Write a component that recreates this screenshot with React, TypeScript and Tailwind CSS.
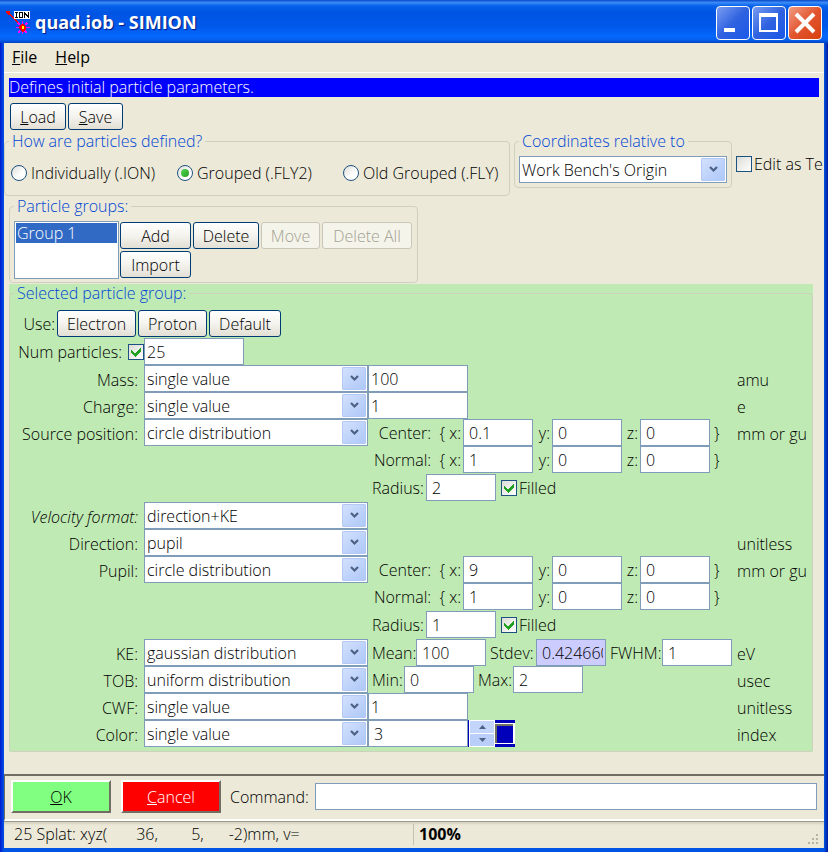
import type { ReactNode } from "react"
import { clsx } from "clsx"

const CheckMark = () => (
  <svg
    viewBox="0 0 16 16"
    className="pointer-events-none absolute inset-0 hidden h-4 w-4 peer-checked:block"
    shapeRendering="crispEdges"
  >
    <path d="M3 6v3l4 4 6-6V3.500l-6 6z" fill="#21a121" />
  </svg>
)

function Check({ label, checked = false, hideLabel = false }: { label: string; checked?: boolean; hideLabel?: boolean }) {
  return (
    <label className="flex items-center gap-0.5 whitespace-nowrap">
      <span className="relative block h-4 w-4">
        <input
          type="checkbox"
          defaultChecked={checked}
          aria-label={label}
          className="peer block h-4 w-4 appearance-none border border-[#1c5180] bg-gradient-to-br from-[#dcdcd7] to-white"
        />
        <CheckMark />
      </span>
      {!hideLabel && <span>{label}</span>}
    </label>
  )
}

function Radio({ label, checked = false }: { label: string; checked?: boolean }) {
  return (
    <label className="flex w-[166px] items-center gap-1 whitespace-nowrap">
      <span className="relative block h-4 w-4">
        <input
          type="radio"
          name="defined"
          defaultChecked={checked}
          className="peer block h-4 w-4 appearance-none rounded-full border border-[#1c5180] bg-gradient-to-br from-[#dcdcd7] to-white to-60%"
        />
        <span className="pointer-events-none absolute inset-1 hidden rounded-full bg-gradient-to-br from-[#55d551] to-[#21a121] peer-checked:block" />
      </span>
      <span>{label}</span>
    </label>
  )
}

function Button({ children, className, disabled }: { children: ReactNode; className?: string; disabled?: boolean }) {
  return (
    <button
      type="button"
      disabled={disabled}
      className={clsx(
        "h-[27px] shrink-0 rounded-[3px] border leading-5 whitespace-nowrap",
        disabled
          ? "border-[#c9c7ba] bg-[#f5f4ea] text-[#a1a192]"
          : "border-[#003c74] bg-gradient-to-b from-white via-[#f4f3ee] to-[#e3dfd5]",
        className,
      )}
    >
      {children}
    </button>
  )
}

function Combo({ value, label, className }: { value: string; label: string; className?: string }) {
  return (
    <div className={clsx("relative h-[27px]", className)}>
      <select
        aria-label={label}
        defaultValue={value}
        className="block h-full w-full appearance-none border border-[#7f9db9] bg-white pl-0.5 leading-5 outline-none"
      >
        <option>{value}</option>
      </select>
      <span className="pointer-events-none absolute inset-y-0.5 right-0.5 flex w-6 items-center justify-center rounded-[1px] border border-[#b4c8f5] bg-gradient-to-br from-[#d2e0fd] to-[#aec8f7]">
        <svg width="9" height="7" viewBox="0 0 9 7">
          <path d="M1 1l3.500 3.500L8 1" fill="none" stroke="#4d6185" strokeWidth="2.200" />
        </svg>
      </span>
    </div>
  )
}

function Field({ value, label, className }: { value: string; label: string; className?: string }) {
  return (
    <input
      type="text"
      aria-label={label}
      defaultValue={value}
      className={clsx("block h-[27px] shrink-0 border border-[#7f9db9] leading-5 outline-none", className)}
    />
  )
}

const small = "w-[70px] bg-white px-[5px]"
const wide = "w-[100px] bg-white px-0.5"

function Vector({ name, x, y, z, lead }: { name: string; x: string; y: string; z: string; lead: string }) {
  return (
    <div className="flex items-center whitespace-pre">
      <span className="flex w-[95px] justify-end pr-0.5">{lead}</span>
      <Field label={`${name} x`} value={x} className={small} />
      <span className="w-[19px] pr-0.5 text-right">y:</span>
      <Field label={`${name} y`} value={y} className={small} />
      <span className="w-[18px] pr-0.5 text-right">z:</span>
      <Field label={`${name} z`} value={z} className={small} />
      <span className="pl-1">{"}"}</span>
    </div>
  )
}

function Radius({ value }: { value: string }) {
  return (
    <div className="flex h-[29px] items-center">
      <span className="w-[58px] pl-1">Radius:</span>
      <Field label="Radius" value={value} className={clsx(small, "mr-[5px]")} />
      <Check label="Filled" checked />
    </div>
  )
}

type RowProps = { label: string; combo?: string; unit?: string; italic?: boolean; children?: ReactNode }

function Row({ label, combo, unit, italic, children }: RowProps) {
  return (
    <div className="grid grid-cols-[135px_224px_1fr_75px] items-center">
      <span className={clsx("pt-0.5 pr-1.5 text-right whitespace-nowrap", italic && "italic")}>{label}</span>
      {combo ? <Combo label={label} value={combo} /> : <span />}
      <div className="flex items-center">{children}</div>
      <span className="pt-0.5 whitespace-nowrap">{unit}</span>
    </div>
  )
}

function TitleBar() {
  const control = "flex h-[34px] w-[34px] items-center justify-center rounded border border-white"
  return (
    <header className="flex h-[43px] items-center justify-between bg-[linear-gradient(180deg,#0a48c8_0%,#3a8cf8_6%,#0560ea_14%,#0054e3_30%,#0058ea_60%,#0468fc_85%,#0560f0_93%,#0040c0_100%)] pr-1.5 pl-1.5">
      <h1 className="flex items-center gap-1 font-['Open_Sans'] text-lg font-bold text-white [text-shadow:1px_1px_1px_#0a1883]">
        <svg width="25" height="26" viewBox="0 0 25 26" shapeRendering="crispEdges">
          <path d="M0 2h4v4H2L0 4z" fill="#f00" />
          <path d="M3 5l11 10" stroke="#f00" strokeWidth="1.500" />
          <rect x="8" y="2" width="16" height="8" fill="#fff" />
          <path d="M9 3.500h3M10.500 3v5M9 8.500h3M13.500 3.500h3v5h-3zM18.500 9V3M22.500 9V3M19 4l3 4" fill="none" stroke="#000" />
          <path d="M12 14l2 2M21 14l-2 2M12 24l2-2M21 24l-2-2M16.500 12v3M16.500 22v3M10 18.500h3M20 18.500h4" stroke="#f0f" strokeWidth="1.500" />
          <path d="M13 18l2-3h3l2 3v2l-3 3h-1l-3-3z" fill="#f00" />
          <rect x="16" y="17" width="2" height="3" fill="#ff0" />
        </svg>
        quad.iob - SIMION
      </h1>
      <div className="flex gap-0.5 pt-0.5">
        <button type="button" aria-label="Minimize" className={clsx(control, "bg-gradient-to-br from-[#7a9cf0] via-[#2f62e0] to-[#1858e8]")}>
          <svg width="32" height="32">
            <rect x="7" y="21" width="11" height="4" fill="#fff" />
          </svg>
        </button>
        <button type="button" aria-label="Maximize" className={clsx(control, "bg-gradient-to-br from-[#7a9cf0] via-[#2f62e0] to-[#1858e8]")}>
          <svg width="32" height="32">
            <path d="M6 6h19v19H6zM8 10v13h15V10z" fill="#fff" fillRule="evenodd" />
          </svg>
        </button>
        <button type="button" aria-label="Close" className={clsx(control, "bg-gradient-to-br from-[#f09a80] via-[#e2552f] to-[#d84008]")}>
          <svg width="32" height="32">
            <path d="M7 7l18 18M25 7L7 25" stroke="#fff" strokeWidth="4" />
          </svg>
        </button>
      </div>
    </header>
  )
}

const legend = "px-[3px] leading-[18px] text-[#0046d5]"
const group = "rounded border border-[#d0d0bf]"
const bevel = "h-[33px] w-[100px] shrink-0 border-2 border-t-white border-r-[#716f64] border-b-[#716f64] border-l-white"

export default function App() {
  return (
    <div className="min-h-screen bg-[linear-gradient(90deg,#0019cf_0,#0055e5_4px,#0055e5_calc(100%-4px),#001898_100%)] font-['Open_Sans',sans-serif] text-base leading-5 font-light text-black">
      <div className="flex min-h-screen flex-col">
        <TitleBar />
        <div className="mx-1 mb-1 flex flex-1 flex-col overflow-hidden bg-[#ece9d8]">
          <nav className="flex h-[30px] items-center gap-[18px] border-b border-white px-2 pb-0.5 text-base font-medium">
            <button type="button"><u>F</u>ile</button>
            <button type="button"><u>H</u>elp</button>
          </nav>

          <p className="mx-[5px] mt-[5px] h-[19px] bg-[#0000ff] leading-[19px] text-white">
            Defines initial particle parameters.
          </p>
          <div className="mt-1.5 flex gap-0.5 px-1.5">
            <Button className="w-14"><u>L</u>oad</Button>
            <Button className="w-[55px]"><u>S</u>ave</Button>
          </div>

          <div className="mt-0.5 flex items-start gap-1">
            <fieldset className={clsx(group, "h-[64px] w-[505px] shrink-0 pl-1.5")}>
              <legend className={clsx(legend, "-ml-0.5")}>How are particles defined?</legend>
              <div className="flex pt-[13px]">
                <Radio label="Individually (.ION)" />
                <Radio label="Grouped (.FLY2)" checked />
                <Radio label="Old Grouped (.FLY)" />
              </div>
            </fieldset>
            <fieldset className={clsx(group, "h-14 w-[218px] shrink-0 px-1")}>
              <legend className={legend}>Coordinates relative to</legend>
              <Combo label="Coordinates relative to" value="Work Bench's Origin" className="mt-1.5" />
            </fieldset>
            <div className="pt-[22px]">
              <Check label="Edit as Te" />
            </div>
          </div>

          <fieldset className={clsx(group, "mt-px ml-[5px] h-[86px] w-[409px] pl-1")}>
            <legend className={legend}>Particle groups:</legend>
            <div className="flex gap-px pt-1.5">
              <ul role="listbox" aria-label="Particle groups" className="h-[58px] w-[105px] border border-[#7f9db9] bg-white p-px">
                <li role="option" aria-selected="true" className="h-5 bg-[#316ac5] pl-px text-white">
                  Group 1
                </li>
              </ul>
              <div className="flex flex-col gap-0.5 pt-px">
                <div className="flex gap-0.5">
                  <Button className="w-[71px]">Add</Button>
                  <Button className="w-[66px]">Delete</Button>
                  <Button className="w-[59px]" disabled>Move</Button>
                  <Button className="w-[90px]" disabled>Delete All</Button>
                </div>
                <Button className="w-[71px]">Import</Button>
              </div>
            </div>
          </fieldset>

          <section className="mt-px mr-[11px] ml-[5px] bg-[#c0eab4]">
            <fieldset className="rounded border border-[#d0d0bf] pb-1">
              <legend className={clsx(legend, "ml-1")}>Selected particle group:</legend>
              <div className="-ml-px">
                <div className="flex gap-0.5 pt-2">
                  <span className="w-[46px] pt-1 text-right">Use:</span>
                  <Button className="w-[79px]">Electron</Button>
                  <Button className="w-[69px]">Proton</Button>
                  <Button className="w-[72px]">Default</Button>
                </div>
                <div className="mt-px flex items-center">
                  <span className="w-[119px] pr-1.5 text-right whitespace-nowrap">Num particles:</span>
                  <Check label="Limit number of particles" checked hideLabel />
                  <Field label="Num particles" value="25" className={wide} />
                </div>
                <Row label="Mass:" combo="single value" unit="amu">
                  <Field label="Mass value" value="100" className={wide} />
                </Row>
                <Row label="Charge:" combo="single value" unit="e">
                  <Field label="Charge value" value="1" className={wide} />
                </Row>
                <Row label="Source position:" combo="circle distribution" unit="mm or gu">
                  <Vector name="Source center" lead="Center:  { x:" x="0.1" y="0" z="0" />
                </Row>
                <Row label="">
                  <Vector name="Source normal" lead="Normal:  { x:" x="1" y="0" z="0" />
                </Row>
                <Row label="">
                  <Radius value="2" />
                </Row>
                <Row label="Velocity format:" combo="direction+KE" italic />
                <Row label="Direction:" combo="pupil" unit="unitless" />
                <Row label="Pupil:" combo="circle distribution" unit="mm or gu">
                  <Vector name="Pupil center" lead="Center:  { x:" x="9" y="0" z="0" />
                </Row>
                <Row label="">
                  <Vector name="Pupil normal" lead="Normal:  { x:" x="1" y="0" z="0" />
                </Row>
                <Row label="">
                  <Radius value="1" />
                </Row>
                <Row label="KE:" combo="gaussian distribution" unit="eV">
                  <span className="w-12 pl-1">Mean:</span>
                  <Field label="Mean" value="100" className={small} />
                  <span className="w-[50px] pl-1">Stdev:</span>
                  <Field label="Stdev" value="0.424660" className="w-[70px] bg-[#ccccff] pr-0.5 pl-[5px]" />
                  <span className="w-14 pl-1">FWHM:</span>
                  <Field label="FWHM" value="1" className={small} />
                </Row>
                <Row label="TOB:" combo="uniform distribution" unit="usec">
                  <span className="w-9 pl-1">Min:</span>
                  <Field label="Min" value="0" className={small} />
                  <span className="w-[39px] pl-1">Max:</span>
                  <Field label="Max" value="2" className={small} />
                </Row>
                <Row label="CWF:" combo="single value" unit="unitless">
                  <Field label="CWF value" value="1" className={wide} />
                </Row>
                <Row label="Color:" combo="single value" unit="index">
                  <Field label="Color value" value="3" className="w-[100px] bg-white px-[5px]" />
                  <div className="flex h-[27px] w-[27px] flex-col border-l border-[#0000bb] bg-white p-px">
                    <button type="button" aria-label="Increase" className="flex flex-1 items-center justify-center bg-[#c3d5fb]">
                      <svg width="7" height="4"><path d="M0 4l3.500-4L7 4z" fill="#4d6185" /></svg>
                    </button>
                    <button type="button" aria-label="Decrease" className="mt-px flex flex-1 items-center justify-center bg-[#b9cffa]">
                      <svg width="7" height="4"><path d="M0 0l3.500 4L7 0z" fill="#4d6185" /></svg>
                    </button>
                  </div>
                  <button type="button" aria-label="Pick color" className="h-[27px] w-5 border-y-[3px] border-[#0000bb] bg-white pr-0.5">
                    <span className="block h-[19px] border-t-2 border-l-2 border-[#716f64] bg-[#0000bb]" />
                  </button>
                </Row>
              </div>
            </fieldset>
          </section>

          <footer className="mt-auto">
            <div className="flex h-[47px] items-center border-t-2 border-b-2 border-l border-[#716f64] border-b-white pr-[7px] pb-0.5 pl-1.5">
              <button type="button" className={clsx(bevel, "bg-[#80ff80]")}>
                <u>O</u>K
              </button>
              <button type="button" className={clsx(bevel, "ml-2.5 bg-[#ff0000] text-white")}>
                <u>C</u>ancel
              </button>
              <label htmlFor="command" className="w-[94px] shrink-0 pl-[9px]">Command:</label>
              <input id="command" type="text" className="h-[27px] min-w-0 flex-1 border border-[#7f9db9] bg-white px-1 outline-none" />
            </div>
            <div className="flex h-[27px] items-center border-t border-[#9d9a8c] pb-0.5 shadow-[inset_0_2px_2px_#d5d2c4]">
              <span className="w-[409px] pl-2.5 whitespace-pre">{"25 Splat: xyz(       36,        5,      -2)mm, v="}</span>
              <span className="h-[21px] border-l border-[#c5c2b0] pl-[5px] font-bold">100%</span>
              <svg width="12" height="12" className="mr-1 ml-auto self-end" fill="#b8b4a2">
                <path d="M8 0h2v2H8zM4 4h2v2H4zM8 4h2v2H8zM0 8h2v2H0zM4 8h2v2H4zM8 8h2v2H8z" />
              </svg>
            </div>
          </footer>
        </div>
      </div>
    </div>
  )
}
